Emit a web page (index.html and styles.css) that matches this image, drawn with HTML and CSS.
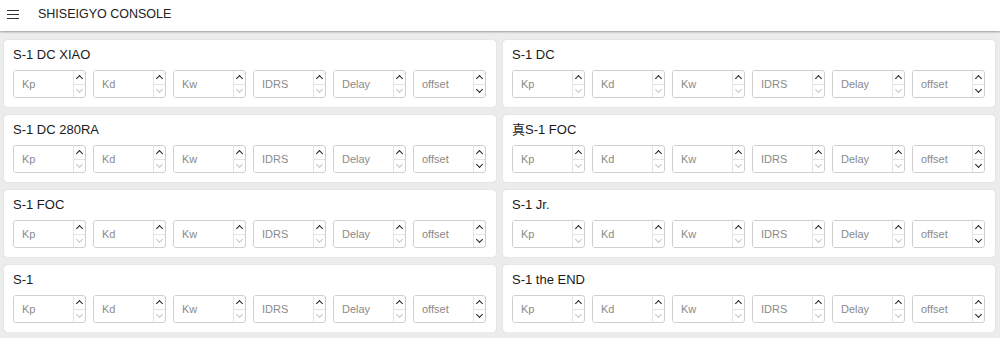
FILE: index.html
```html
<!DOCTYPE html>
<html lang="en">
<head>
  <meta charset="UTF-8" />
  <meta name="viewport" content="width=device-width, initial-scale=1.0" />
  <title>SHISEIGYO CONSOLE</title>
  <link rel="stylesheet" href="styles.css">
</head>
<body>
  <header class="topbar">
    <span class="menu-btn">
      <svg width="12" height="9" viewBox="0 0 12 9"><path d="M0 0.5h12M0 4.5h12M0 8.5h12" stroke="#333" stroke-width="1.2"/></svg>
    </span>
    <span class="app-title">SHISEIGYO CONSOLE</span>
  </header>
  <main class="grid" id="grid"></main>
  <script>
    const units = ["S-1 DC XIAO", "S-1 DC", "S-1 DC 280RA", "真S-1 FOC", "S-1 FOC", "S-1 Jr.", "S-1", "S-1 the END"],
          params = ["Kp", "Kd", "Kw", "IDRS", "Delay", "offset"],
          grid = document.getElementById("grid");
    units.forEach(name => {
      const fields = params.map(p =>
        `<div class="field">
          <input type="number" placeholder="${p}"${p === "offset" ? "" : ' min="0"'} />
          <span class="spin${p === "offset" ? "" : " at-min"}"><i class="up"></i><i class="down"></i></span>
        </div>`).join("");
      grid.insertAdjacentHTML("beforeend",
        `<section class="card"><h2>${name}</h2><div class="fields">${fields}</div></section>`);
    });
  </script>
</body>
</html>
```

FILE: styles.css
```css
* { box-sizing: border-box; margin: 0; padding: 0; }
body {
  font-family: "Liberation Sans", Arial, "Noto Sans CJK JP", sans-serif;
  background: #ececec;
  color: #222;
}
.topbar {
  height: 31px;
  background: #fff;
  display: flex;
  align-items: center;
  box-shadow: 0 1px 2px rgba(0,0,0,0.35);
  position: relative;
}
.menu-btn { display: flex; margin-left: 7px; margin-top: -3px; }
.app-title { margin-left: 19px; font-size: 12.5px; color: #222; margin-top: -3px; }

.grid {
  display: grid;
  grid-template-columns: 492px 492px;
  column-gap: 7px;
  row-gap: 8px;
  padding: 9px 5px 0 4px;
}
.card {
  background: #fff;
  border-radius: 3px;
  padding: 7px 8px 9px 9px;
  box-shadow: 0 0 1px rgba(0,0,0,0.25);
}
.card h2 {
  font-size: 13px;
  font-weight: normal;
  line-height: 16px;
  margin-bottom: 7px;
  color: #1a1a1a;
}
.fields { display: flex; gap: 7px; }
.field {
  width: 73px;
  height: 28px;
  border: 1px solid #cfcfcf;
  border-radius: 3px;
  display: flex;
  overflow: hidden;
}
.field input {
  flex: 1;
  min-width: 0;
  border: none;
  outline: none;
  font: inherit;
  font-size: 11px;
  padding-left: 8px;
  color: #333;
  -moz-appearance: textfield;
  appearance: textfield;
}
.field input::placeholder { color: #8a8a8a; }
.field input::-webkit-inner-spin-button,
.field input::-webkit-outer-spin-button { -webkit-appearance: none; margin: 0; }
.spin {
  width: 12px;
  border-left: 1px solid #e4e4e4;
  display: flex;
  flex-direction: column;
}
.spin i {
  flex: 1;
  display: flex;
  align-items: center;
  justify-content: center;
}
.spin i + i { border-top: 1px solid #e4e4e4; }
.spin i::before {
  content: "";
  width: 4px;
  height: 4px;
  border-left: 1.5px solid #222;
  border-top: 1.5px solid #222;
}
.spin .up::before { transform: rotate(45deg); margin-top: 3px; }
.spin .down::before { transform: rotate(225deg); margin-top: -3px; }
.spin.at-min .down::before { border-color: #c4c4c4; border-width: 1px; }
```
